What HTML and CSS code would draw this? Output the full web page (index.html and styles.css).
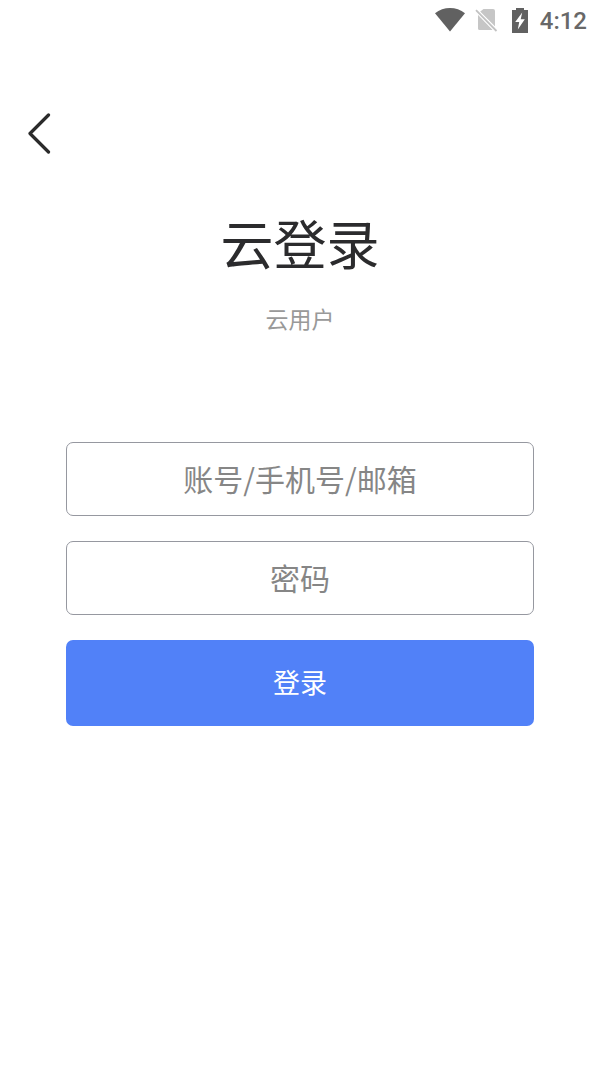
FILE: index.html
```html
<!DOCTYPE html>
<html lang="zh-CN">
<head>
<meta charset="utf-8">
<meta name="viewport" content="width=device-width, initial-scale=1">
<title>云登录</title>
<link rel="stylesheet" href="styles.css">
</head>
<body>
<div class="status-bar">
  <svg class="wifi" width="30" height="24" viewBox="0 0 30 24" aria-hidden="true"><path d="M0 5.200C8.500-1.700 21.500-1.700 30 5.200L15 23.500Z" fill="#616161"/></svg>
  <svg class="sim" width="23" height="24" viewBox="0 0 23 24" aria-hidden="true"><path d="M8.500 1H18Q20 1 20 3V18.500L5 3.800ZM3 7.200L17.500 22H5Q3 22 3 20Z" fill="#c6c6c6"/><path d="M1 2.200L21.500 23" stroke="#fff" stroke-width="4"/><path d="M1 2.200L21.500 23" stroke="#c2c2c2" stroke-width="1.800"/><path d="M3 7L17.500 22H5Q3 22 3 20Z" fill="#c6c6c6"/></svg>
  <svg class="battery" width="16" height="25" viewBox="0 0 16 25" aria-hidden="true"><path d="M4 0H12V2H16V25H0V2H4Z" fill="#616161"/><path d="M10.200 4.500L3.200 14H7.200L5.800 21.500L12.800 11.200H8.700Z" fill="#fff"/></svg>
  <time class="clock">4:12</time>
</div>
<nav class="nav">
  <button class="back" type="button" aria-label="返回">
    <svg width="24" height="42" viewBox="0 0 24 42" aria-hidden="true"><path d="M21.500 3L3 21.500L21.500 40" fill="none" stroke="#2b2b2b" stroke-width="3.200" stroke-linecap="round" stroke-linejoin="round"/></svg>
  </button>
</nav>
<main class="login">
  <h1 class="title">云登录</h1>
  <p class="subtitle">云用户</p>
  <form class="form">
    <input class="field" type="text" placeholder="账号/手机号/邮箱" aria-label="账号/手机号/邮箱">
    <input class="field" type="password" placeholder="密码" aria-label="密码">
    <button class="submit" type="submit">登录</button>
  </form>
</main>
</body>
</html>
```
FILE: styles.css
```css
* {
  box-sizing: border-box;
}

body {
  margin: 0;
  background: #fff;
  color: #2b2b2d;
  font-family: "Noto Sans CJK SC", sans-serif;
}

.status-bar {
  display: flex;
  align-items: center;
  justify-content: flex-end;
  height: 40px;
  padding-right: 13px;
}

.sim {
  margin-left: 10px;
}

.battery {
  margin-left: 14px;
}

.clock {
  padding-top: 2px;
  margin-left: 12px;
  color: #686868;
  font: 500 24px/28px Roboto, sans-serif;
}

.nav {
  padding: 72px 27px 0;
}

.back {
  display: block;
  padding: 0;
  border: 0;
  background: none;
}

.back svg {
  display: block;
}

.login {
  padding: 48px 66px;
  text-align: center;
}

.title {
  margin: 0;
  font-size: 53px;
  font-weight: 400;
  line-height: 80px;
}

.subtitle {
  margin: 19px 0 0;
  color: #999;
  font-size: 23px;
  font-weight: 400;
  line-height: 34px;
}

.form {
  display: flex;
  flex-direction: column;
  gap: 25px;
  margin-top: 107px;
}

.field {
  width: 100%;
  height: 74px;
  padding: 0 16px 2px;
  border: 1px solid #9698a0;
  border-radius: 7px;
  background: #fff;
  color: #2b2b2d;
  font: 400 30px/44px "Noto Sans CJK SC", sans-serif;
  text-align: center;
}

.field::placeholder {
  color: #868686;
  opacity: 1;
}

.submit {
  height: 86px;
  padding: 0 16px 2px;
  border: 0;
  border-radius: 7px;
  background: #5181f8;
  color: #fff;
  font: 400 27px/40px "Noto Sans CJK SC", sans-serif;
}
```
